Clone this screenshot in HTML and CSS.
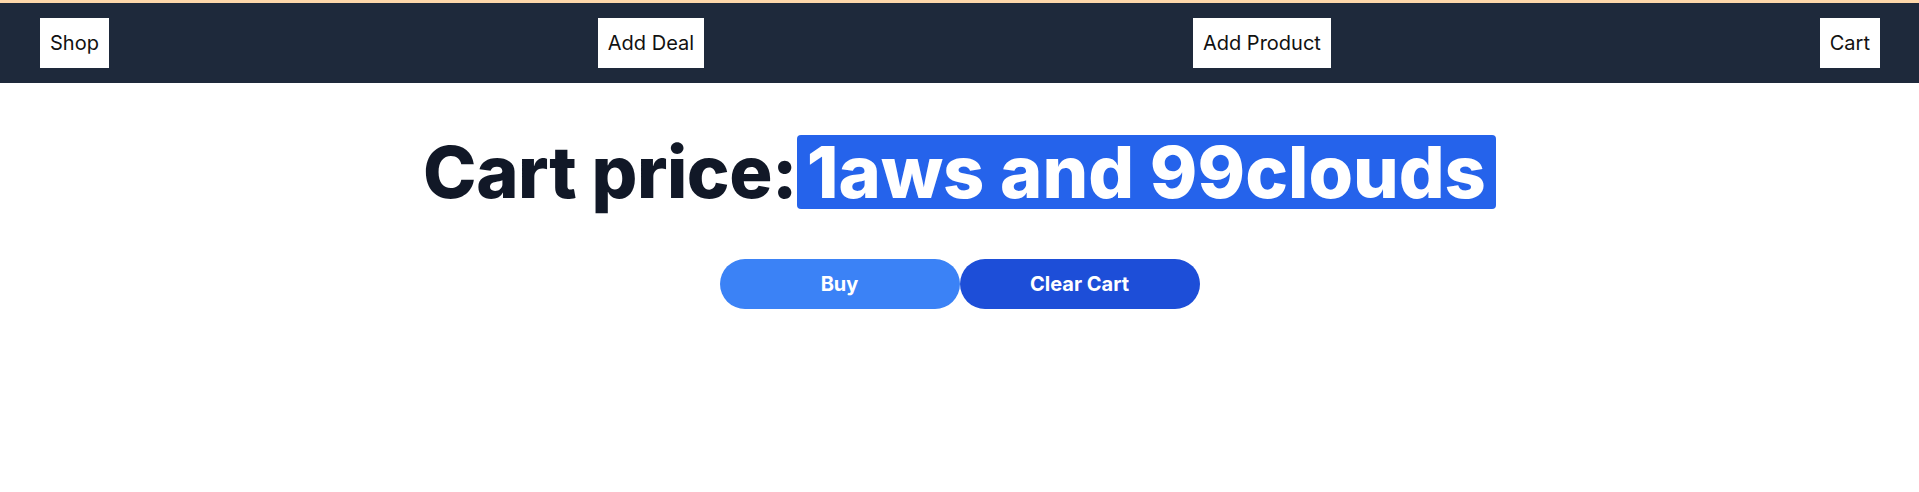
FILE: index.html
```html
<!DOCTYPE html>
<html lang="en">
<head>
<meta charset="utf-8">
<title>Cart</title>
<link rel="stylesheet" href="styles.css">
</head>
<body>
<nav class="navbar">
  <a class="nav-link" href="#">Shop</a>
  <a class="nav-link" href="#">Add Deal</a>
  <a class="nav-link" href="#">Add Product</a>
  <a class="nav-link" href="#">Cart</a>
</nav>
<main class="cart">
  <h1 class="cart-title">Cart price:<span class="cart-price">1aws and 99clouds</span></h1>
  <div class="cart-actions">
    <button class="btn btn-buy">Buy</button>
    <button class="btn btn-clear">Clear Cart</button>
  </div>
</main>
</body>
</html>
```
FILE: styles.css
```css
* { box-sizing: border-box; }
html, body { margin: 0; padding: 0; background: #ffffff; }
body { font-family: Inter, "Noto Sans", sans-serif; }

.navbar {
  display: flex;
  justify-content: space-between;
  align-items: center;
  height: 83px;
  padding: 0 39px 0 40px;
  background: #1e293b;
  border-top: 3px solid #fed7aa;
}
.nav-link {
  display: block;
  background: #ffffff;
  color: #111111;
  text-decoration: none;
  font-size: 20px;
  line-height: 28px;
  padding: 11px 10px;
}

.cart {
  display: flex;
  flex-direction: column;
  align-items: center;
}
.cart-title {
  margin: 52px 0 0;
  font-size: 72px;
  line-height: 1;
  font-weight: 800;
  color: #111827;
  letter-spacing: -0.5px;
}
.cart-price {
  display: inline-block;
  background: #2563eb;
  color: #ffffff;
  border-radius: 4px;
  padding: 1px 10px;
  letter-spacing: 0;
}
.cart-actions {
  display: flex;
  margin-top: 50px;
}
.btn {
  width: 240px;
  height: 50px;
  border: none;
  border-radius: 25px;
  color: #ffffff;
  font-family: Inter, "Noto Sans", sans-serif;
  font-size: 20px;
  font-weight: 700;
  cursor: pointer;
}
.btn-buy { background: #3b82f6; }
.btn-clear { background: #1d4ed8; }
```
